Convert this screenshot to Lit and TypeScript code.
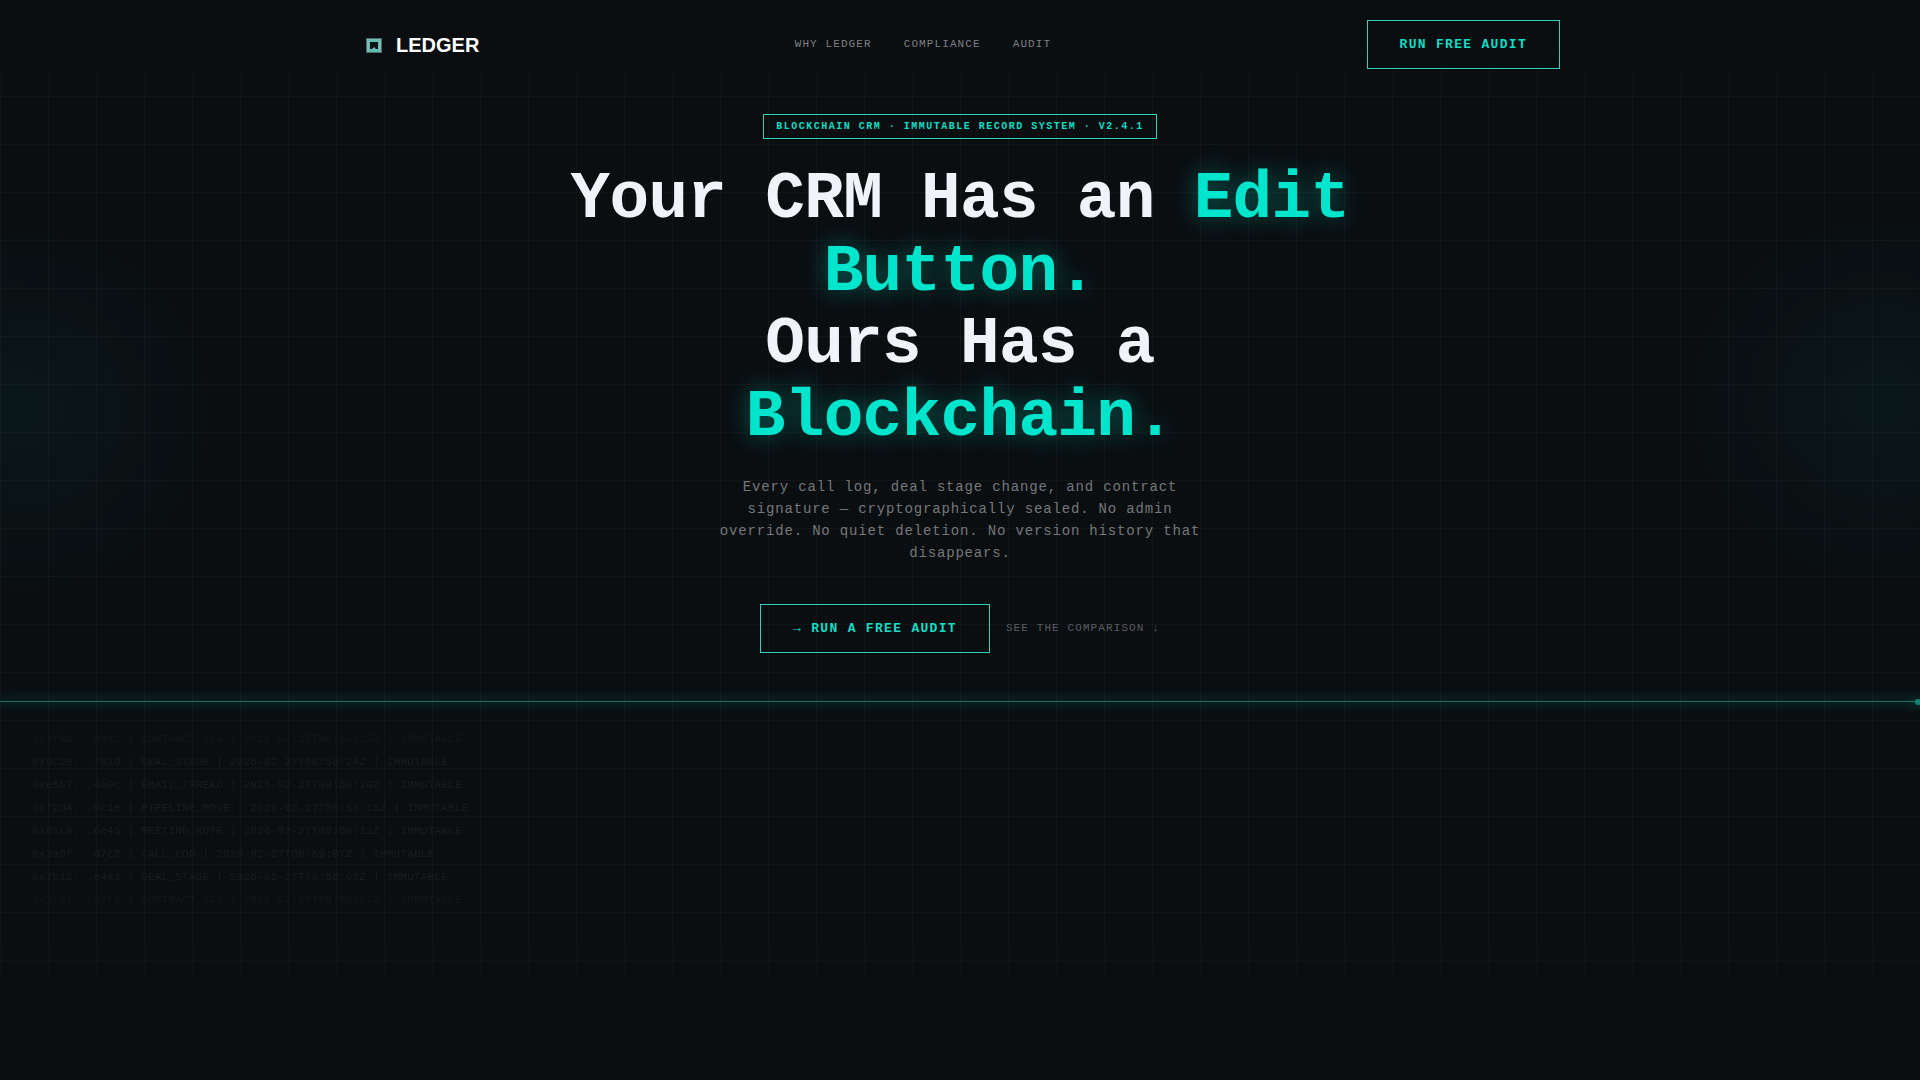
import { LitElement, html, css } from "lit";
import { customElement } from "lit/decorators.js";

interface LedgerEntry {
  hash: string;
  kind: string;
  time: string;
}

const ENTRIES: LedgerEntry[] = [
  { hash: "0x3f8a...b0a2", kind: "CONTRACT_SIG", time: "2026-02-27T08:58:29Z" },
  { hash: "0x9c2e...f81d", kind: "DEAL_STAGE", time: "2026-02-27T08:58:24Z" },
  { hash: "0xe5b7...4a0c", kind: "EMAIL_THREAD", time: "2026-02-27T08:58:20Z" },
  { hash: "0xf2d4...9c1e", kind: "PIPELINE_MOVE", time: "2026-02-27T08:58:16Z" },
  { hash: "0xb1c8...6e4a", kind: "MEETING_NOTE", time: "2026-02-27T08:58:11Z" },
  { hash: "0x3a9f...d7c2", kind: "CALL_LOG", time: "2026-02-27T08:59:07Z" },
  { hash: "0x7b12...e4a3", kind: "DEAL_STAGE", time: "2026-02-27T08:58:03Z" },
  { hash: "0x2c91...a5f8", kind: "CONTRACT_SIG", time: "2026-02-27T08:58:01Z" },
];

@customElement("app-root")
export class AppRoot extends LitElement {
  static styles = css`
    :host {
      display: block;
      position: relative;
      min-height: 100vh;
      overflow: hidden;
      background: #0a0e11;
      color: #f0f4f8;
      font-family: "Liberation Mono", "Courier New", monospace;
    }
    .backdrop {
      position: absolute;
      inset: 0;
      pointer-events: none;
    }
    .grid {
      background-image: linear-gradient(rgba(255, 255, 255, 0.03) 1px, transparent 1px),
        linear-gradient(90deg, rgba(255, 255, 255, 0.03) 1px, transparent 1px);
      background-size: 48px 48px;
      mask-image: linear-gradient(transparent 3%, #000 10%, #000 86%, transparent 95%);
    }
    .glow {
      background: radial-gradient(ellipse 200px 190px at 1% 38%, rgba(0, 229, 204, 0.045), transparent),
        radial-gradient(ellipse 200px 190px at 98% 37%, rgba(0, 229, 204, 0.045), transparent);
    }
    .page {
      position: relative;
    }
    .nav {
      display: flex;
      align-items: center;
      justify-content: space-between;
      max-width: 1200px;
      margin: 0 auto;
      padding: 20px 24px 21px;
    }
    .brand {
      display: flex;
      align-items: center;
      gap: 8px;
      color: #ffffff;
      font: 700 20px/28px "Liberation Sans", Arial, sans-serif;
      text-decoration: none;
    }
    .mark {
      width: 28px;
      height: 28px;
    }
    .links {
      display: flex;
      gap: 32px;
    }
    .link {
      color: #7d8083;
      font-size: 11px;
      line-height: 13px;
      letter-spacing: 0.1em;
      text-decoration: none;
    }
    .quiet {
      color: #5a5d60;
    }
    .button {
      padding: 16px 32px;
      border: 1px solid #2ed3bd;
      border-radius: 0;
      background: transparent;
      color: #12dcc4;
      font: 700 13px/15px "Liberation Mono", "Courier New", monospace;
      letter-spacing: 0.1em;
      cursor: pointer;
    }
    .hero {
      display: flex;
      flex-direction: column;
      align-items: center;
      padding: 24px 24px 48px;
      text-align: center;
    }
    .badge {
      padding: 6px 12px;
      border: 1px solid #2ed3bd;
      color: #12dcc4;
      font-size: 10px;
      font-weight: 700;
      line-height: 11px;
      letter-spacing: 0.15em;
    }
    .title {
      max-width: 820px;
      margin: 25px 0 22px;
      font-size: 66px;
      font-weight: 700;
      line-height: 1.1;
      letter-spacing: -0.01em;
    }
    .accent {
      color: #00e5cc;
      text-shadow: 0 0 24px rgba(0, 229, 204, 0.4);
    }
    .lead {
      max-width: 500px;
      margin: 0 0 40px;
      color: #75787b;
      font-size: 14px;
      line-height: 22px;
      letter-spacing: 0.06em;
    }
    .actions {
      display: flex;
      align-items: center;
      gap: 16px;
    }
    .rule {
      position: relative;
      height: 1px;
      background: #226f62;
      box-shadow: 0 0 12px 2px rgba(0, 229, 204, 0.2);
    }
    .pulse {
      position: absolute;
      top: -2px;
      right: -1px;
      width: 6px;
      height: 6px;
      border-radius: 50%;
      background: #0b8474;
      box-shadow: 0 0 12px 2px rgba(0, 229, 204, 0.2);
    }
    .log {
      margin: 0;
      padding: 26px 32px;
      list-style: none;
      color: #191d20;
      font-size: 11px;
      line-height: 23px;
      letter-spacing: 0.02em;
      white-space: nowrap;
      mask-image: linear-gradient(transparent, #000 26%, #000 78%, transparent 92%);
    }
  `;

  render() {
    return html`
      <div class="backdrop grid"></div>
      <div class="backdrop glow"></div>
      <div class="page">
        <header class="nav">
          <a class="brand" href="#top">
            <svg class="mark" viewBox="0 0 28 28" aria-hidden="true">
              <rect x="6" y="7" width="16" height="15" fill="#4a6b6b" />
              <rect x="7" y="8" width="14" height="13" fill="#7fb9b3" />
              <rect x="9" y="9" width="10" height="12" fill="#5fbcb0" />
              <path d="M10 11h8v7h-2l-2-2-2 2h-2z" fill="#0b1416" />
            </svg>
            LEDGER
          </a>
          <nav class="links">
            <a class="link" href="#why">WHY LEDGER</a>
            <a class="link" href="#compliance">COMPLIANCE</a>
            <a class="link" href="#audit">AUDIT</a>
          </nav>
          <button class="button" type="button">RUN FREE AUDIT</button>
        </header>
        <main>
          <section class="hero">
            <div class="badge">BLOCKCHAIN CRM · IMMUTABLE RECORD SYSTEM · V2.4.1</div>
            <h1 class="title">
              Your CRM Has an <span class="accent">Edit Button.</span><br />
              Ours Has a <span class="accent">Blockchain.</span>
            </h1>
            <p class="lead">
              Every call log, deal stage change, and contract signature — cryptographically sealed. No admin override. No
              quiet deletion. No version history that disappears.
            </p>
            <div class="actions">
              <button class="button" type="button">→ RUN A FREE AUDIT</button>
              <a class="link quiet" href="#comparison">SEE THE COMPARISON ↓</a>
            </div>
          </section>
          <div class="rule"><span class="pulse"></span></div>
          <ul class="log">
            ${ENTRIES.map((e) => html`<li>${e.hash} | ${e.kind} | ${e.time} | IMMUTABLE</li>`)}
          </ul>
        </main>
      </div>
    `;
  }
}
